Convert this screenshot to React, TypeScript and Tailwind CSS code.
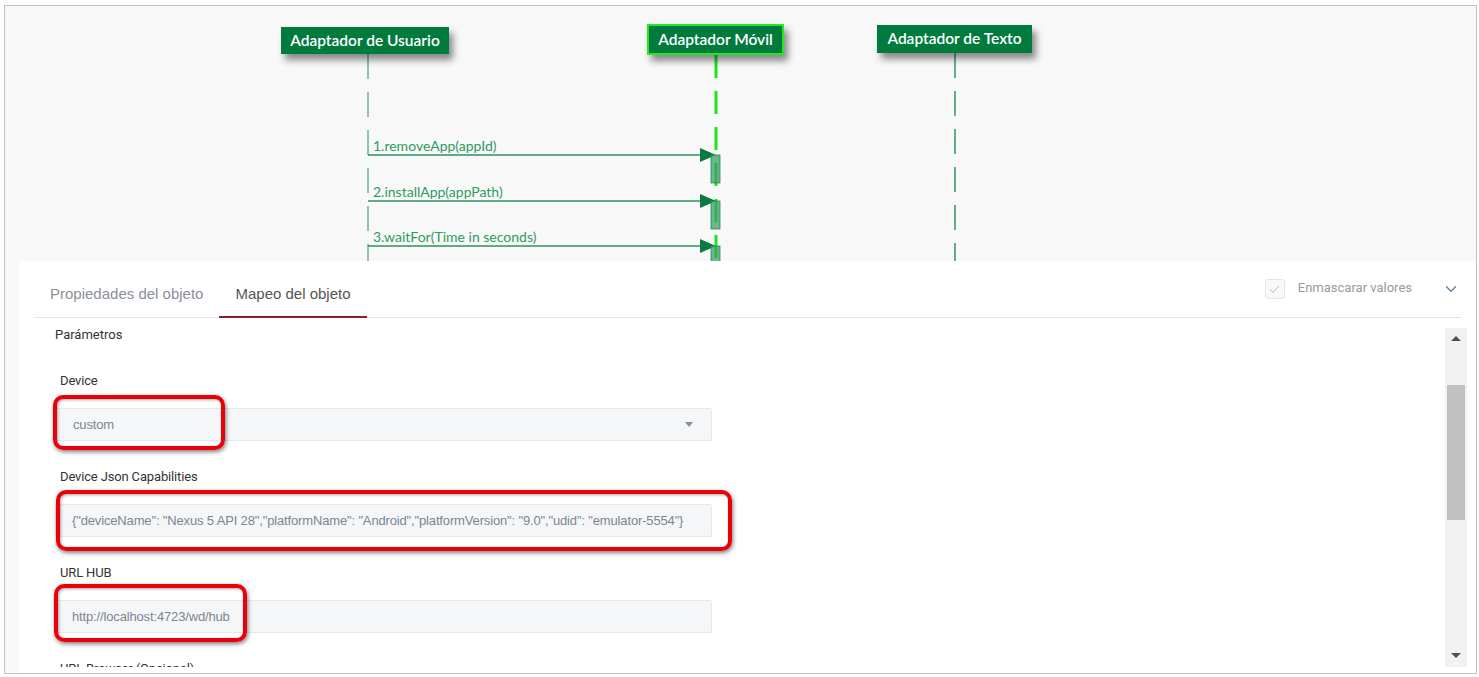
import { ChevronDown, Check } from 'lucide-react';

type Participant = {
  name: string;
  left: number;
  top: number;
  width: number;
  height: number;
  active?: boolean;
};

const PARTICIPANTS: Participant[] = [
  { name: 'Adaptador de Usuario', left: 276, top: 21, width: 168, height: 27 },
  { name: 'Adaptador Móvil', left: 642, top: 18, width: 137, height: 31, active: true },
  { name: 'Adaptador de Texto', left: 872, top: 19, width: 155, height: 28 },
];

const MESSAGES = [
  { label: '1.removeApp(appId)', y: 149, barEnd: 177 },
  { label: '2.installApp(appPath)', y: 195, barEnd: 223 },
  { label: '3.waitFor(Time in seconds)', y: 240, barEnd: 268 },
];

function SequenceDiagram() {
  return (
    <div className="relative h-[255px] shrink-0 overflow-hidden font-['Lato',sans-serif]">
      <svg className="absolute inset-0" width="1471" height="255">
        <line x1="363" y1="48" x2="363" y2="255" stroke="#62b88c" strokeWidth="1.5" strokeDasharray="25 13" />
        <line x1="711" y1="49" x2="711" y2="255" stroke="#1ee41e" strokeWidth="3" strokeDasharray="23 13" />
        <line x1="950" y1="47" x2="950" y2="255" stroke="#2e9a60" strokeWidth="1.5" strokeDasharray="25 13" />
        {MESSAGES.map((m) => (
          <g key={m.label}>
            <line x1="363" y1={m.y} x2="697" y2={m.y} stroke="#2e9060" strokeWidth="1.5" />
            <polygon points={`695,${m.y - 7} 711,${m.y} 695,${m.y + 7}`} fill="#0c7a3e" />
            <rect x="706" y={m.y} width="9" height={m.barEnd - m.y} fill="#3d9f6a" fillOpacity="0.75" stroke="#2a8a56" strokeWidth="0.8" />
            <text x="368" y={m.y - 4} fill="#2f9a63" fontSize="14" fontFamily="Lato, sans-serif">
              {m.label}
            </text>
          </g>
        ))}
      </svg>
      {PARTICIPANTS.map((p) => (
        <div
          key={p.name}
          className={`absolute flex items-center justify-center bg-[#007a3d] text-white text-[15.5px] font-semibold shadow-[4px_6px_7px_rgba(0,0,0,0.45)] ${
            p.active ? 'border-2 border-[#22ea22]' : ''
          }`}
          style={{ left: p.left, top: p.top, width: p.width, height: p.height }}
        >
          {p.name}
        </div>
      ))}
    </div>
  );
}

function Highlight({ left, top, width, height }: { left: number; top: number; width: number; height: number }) {
  return (
    <div
      className="pointer-events-none absolute rounded-[10px] border-[4px] border-[#ea0008] shadow-[1px_2px_4px_rgba(0,0,0,0.5),inset_1px_1px_3px_rgba(0,0,0,0.35)]"
      style={{ left, top, width, height }}
    />
  );
}

function Field({ label, children }: { label: string; children: React.ReactNode }) {
  return (
    <div className="mb-[26px]">
      <div className="ml-[5px] h-[20px] leading-[20px] text-[13px] text-[#333] tracking-[-0.15px]">{label}</div>
      <div className="relative mt-[17px] w-[657px]">{children}</div>
    </div>
  );
}

export default function App() {
  return (
    <div className="w-[1479px] h-[677px] bg-white pt-[5px] pl-[4px] font-['Roboto',sans-serif]">
      <div className="flex h-[669px] w-[1473px] flex-col overflow-hidden border border-[#c3c3c3] bg-[#f8f8f8]">
        <SequenceDiagram />

        <div className="ml-[14px] flex min-h-0 flex-1 flex-col bg-white">
          <div className="mx-[15px] flex h-[57px] shrink-0 items-stretch border-b border-[#e4e4e4]">
            <div className="flex items-center px-[16px] pt-[10px] text-[15px] text-[#8a9099] font-['Liberation_Sans',sans-serif]">
              Propiedades del objeto
            </div>
            <div className="relative flex items-center px-[16px] pt-[10px] text-[15px] text-[#555] font-['Liberation_Sans',sans-serif]">
              Mapeo del objeto
              <span className="absolute bottom-[-1px] left-0 right-0 h-[2px] bg-[#8e1f1f]" />
            </div>
            <div className="ml-auto flex items-center">
              <span className="flex h-[20px] w-[20px] items-center justify-center rounded-[3px] border border-[#e1e5e9] bg-[#f6f8fa]">
                <Check size={13} strokeWidth={1.5} className="text-[#a6adb4]" />
              </span>
              <span className="ml-[13px] mb-[3px] text-[13px] text-[#9a9a9a]">Enmascarar valores</span>
              <ChevronDown size={18} strokeWidth={1.6} className="ml-[30px] mr-[1px] text-[#5d7995]" />
            </div>
          </div>

          <div className="flex min-h-0 flex-1">
            <div className="mb-[6px] min-w-0 flex-1 overflow-hidden pl-[36px] pt-[7px]">
              <div className="h-[20px] leading-[20px] text-[13px] text-[#333]">Parámetros</div>
              <div className="mt-[26px]">
                <Field label="Device">
                  <div className="flex h-[33px] items-center justify-between rounded-[2px] border border-[#e6e9ec] bg-[#f4f6f8] pl-[17px] pr-[18px] text-[13px] text-[#7b8692] tracking-[-0.15px] font-['Liberation_Sans',sans-serif]">
                    <span>custom</span>
                    <span className="h-0 w-0 border-x-[4px] border-t-[5px] border-x-transparent border-t-[#8a8f95]" />
                  </div>
                  <Highlight left={-2} top={-13} width={172} height={55} />
                </Field>
                <Field label="Device Json Capabilities">
                  <div className="flex h-[33px] items-center rounded-[2px] border border-[#e6e9ec] bg-[#f4f6f8] pl-[16px] text-[13px] text-[#7b8692] whitespace-nowrap tracking-[-0.15px] font-['Liberation_Sans',sans-serif]">
                    {'{"deviceName": "Nexus 5 API 28","platformName": "Android","platformVersion": "9.0","udid": "emulator-5554"}'}
                  </div>
                  <Highlight left={1} top={-14} width={676} height={61} />
                </Field>
                <Field label="URL HUB">
                  <div className="flex h-[33px] items-center rounded-[2px] border border-[#e6e9ec] bg-[#f4f6f8] pl-[16px] text-[13px] text-[#7b8692] tracking-[-0.15px] font-['Liberation_Sans',sans-serif]">
                    http://localhost:4723/wd/hub
                  </div>
                  <Highlight left={-1} top={-16} width={193} height={58} />
                </Field>
                <Field label="URL Browser (Opcional)">
                  <div className="h-[33px] rounded-[2px] border border-[#e6e9ec] bg-[#f4f6f8]" />
                </Field>
              </div>
            </div>

            <div className="mb-[6px] mr-[9px] mt-[10px] flex w-[22px] shrink-0 flex-col items-center bg-[#f1f1f1]">
              <span className="mt-[8px] h-0 w-0 border-x-[5px] border-b-[5px] border-x-transparent border-b-[#505050]" />
              <div className="mt-[44px] h-[135px] w-[18px] bg-[#c1c1c1]" />
              <span className="mb-[9px] mt-auto h-0 w-0 border-x-[5px] border-t-[5px] border-x-transparent border-t-[#505050]" />
            </div>
          </div>
        </div>
      </div>
    </div>
  );
}
